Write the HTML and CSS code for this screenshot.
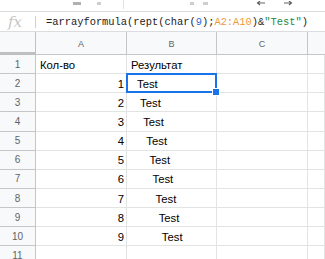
FILE: index.html
```html
<!DOCTYPE html>
<html lang="ru">

<head>
    <meta charset="UTF-8">
    <meta name="viewport" content="width=device-width, initial-scale=1.0">
    <title>Таблица</title>
    <link rel="stylesheet" href="styles.css">
</head>

<body>
    <div class="toolbar">
        <span class="tool tool-a"></span>
        <span class="tool tool-b"></span>
        <span class="tool-sep"></span>
        <span class="tool tool-c"></span>
        <span class="tool tool-d"></span>
        <svg class="arrow arrow-left" width="9" height="6" viewBox="0 0 9 6">
            <path d="M9 2H2M4 0L1.5 2L4 4" fill="none" stroke="#5f6368" stroke-width="1.2" />
        </svg>
        <svg class="arrow arrow-right" width="9" height="6" viewBox="0 0 9 6">
            <path d="M0 2H7M5 0L7.5 2L5 4" fill="none" stroke="#5f6368" stroke-width="1.2" />
        </svg>
    </div>

    <div class="formula-bar">
        <span class="fx">fx</span>
        <span class="fx-sep"></span>
        <span class="formula">=arrayformula(rept(char(<span class="f-num">9</span>);<span class="f-range">A2:A10</span>)&amp;<span class="f-str">"Test"</span>)</span>
    </div>

    <div class="sheet">
        <div class="corner"></div>
        <div class="col-head">A</div>
        <div class="col-head">B</div>
        <div class="col-head">C</div>
        <div class="col-head col-last"></div>

        <div class="row-head">1</div>
        <div class="cell">Кол-во</div>
        <div class="cell">Результат</div>
        <div class="cell"></div>
        <div class="cell"></div>

        <div class="row-head">2</div>
        <div class="cell num">1</div>
        <div class="cell result selected" style="--tabs: 1">Test</div>
        <div class="cell"></div>
        <div class="cell"></div>

        <div class="row-head">3</div>
        <div class="cell num">2</div>
        <div class="cell result" style="--tabs: 2">Test</div>
        <div class="cell"></div>
        <div class="cell"></div>

        <div class="row-head">4</div>
        <div class="cell num">3</div>
        <div class="cell result" style="--tabs: 3">Test</div>
        <div class="cell"></div>
        <div class="cell"></div>

        <div class="row-head">5</div>
        <div class="cell num">4</div>
        <div class="cell result" style="--tabs: 4">Test</div>
        <div class="cell"></div>
        <div class="cell"></div>

        <div class="row-head">6</div>
        <div class="cell num">5</div>
        <div class="cell result" style="--tabs: 5">Test</div>
        <div class="cell"></div>
        <div class="cell"></div>

        <div class="row-head">7</div>
        <div class="cell num">6</div>
        <div class="cell result" style="--tabs: 6">Test</div>
        <div class="cell"></div>
        <div class="cell"></div>

        <div class="row-head">8</div>
        <div class="cell num">7</div>
        <div class="cell result" style="--tabs: 7">Test</div>
        <div class="cell"></div>
        <div class="cell"></div>

        <div class="row-head">9</div>
        <div class="cell num">8</div>
        <div class="cell result" style="--tabs: 8">Test</div>
        <div class="cell"></div>
        <div class="cell"></div>

        <div class="row-head">10</div>
        <div class="cell num">9</div>
        <div class="cell result" style="--tabs: 9">Test</div>
        <div class="cell"></div>
        <div class="cell"></div>

        <div class="row-head">11</div>
        <div class="cell"></div>
        <div class="cell"></div>
        <div class="cell"></div>
        <div class="cell"></div>
    </div>
</body>

</html>
```

FILE: styles.css
```css
:root {
    --grid-line: #e2e3e3;
    --head-line: #c4c7c5;
    --head-bg: #f8f9fa;
    --row-h: 19.15px;
}

body {
    margin: 0;
    padding: 0;
    width: 325px;
    height: 259px;
    overflow: hidden;
    background-color: white;
    font-family: "Liberation Sans", Arial, sans-serif;
}

/* cut off toolbar at the top */
.toolbar {
    height: 12px;
    box-sizing: border-box;
    border-bottom: 1px solid #dadce0;
    display: flex;
    align-items: flex-start;
    overflow: hidden;
}

.tool {
    height: 3px;
    margin-top: 2px;
    background-color: #9aa0a6;
    opacity: 0.5;
}

.tool-a {
    width: 8px;
    margin-left: 73px;
    background-color: #5f6368;
}

.tool-b {
    width: 4px;
    margin-left: 16px;
}

.tool-sep {
    width: 1px;
    height: 9px;
    margin-left: 22px;
    background-color: #e0e0e0;
}

.tool-c {
    width: 4px;
    margin-left: 66px;
}

.tool-d {
    width: 5px;
    margin-left: 9px;
}

.arrow {
    margin-top: 1px;
}

.arrow-left {
    margin-left: 48px;
}

.arrow-right {
    margin-left: 19px;
}

/* formula bar */
.formula-bar {
    height: 20px;
    box-sizing: border-box;
    border-bottom: 1px solid #dadce0;
    display: flex;
    align-items: center;
}

.fx {
    width: 18px;
    margin-left: 8px;
    font-family: "DejaVu Serif", "Liberation Serif", serif;
    font-style: italic;
    font-size: 15px;
    color: #c6c6c6;
    line-height: 16px;
}

.fx-sep {
    width: 1px;
    height: 12px;
    margin-left: 9px;
    background-color: #d0d0d0;
}

.formula {
    margin-left: 10px;
    font-family: "Liberation Mono", "DejaVu Sans Mono", monospace;
    font-size: 10.4px;
    color: #222;
    white-space: pre;
}

.f-num {
    color: #2e6ad6;
}

.f-range {
    color: #f09a36;
}

.f-str {
    color: #1f8a3c;
}

/* sheet grid */
.sheet {
    display: grid;
    grid-template-columns: 36px 91px 90px 91px 1fr;
    grid-template-rows: 23px;
    grid-auto-rows: var(--row-h);
}

.corner {
    background-color: var(--head-bg);
    border-right: 3px solid #c0c0c0;
    border-bottom: 3px solid #c0c0c0;
    margin-right: -2px;
}

.col-head {
    background-color: var(--head-bg);
    border-right: 1px solid var(--head-line);
    border-bottom: 1px solid var(--head-line);
    display: flex;
    justify-content: center;
    align-items: center;
    padding-top: 2px;
    font-size: 9px;
    color: #5f6368;
}

.col-last {
    border-right: none;
}

.row-head {
    background-color: var(--head-bg);
    border-right: 1px solid var(--head-line);
    border-bottom: 1px solid var(--head-line);
    display: flex;
    justify-content: center;
    align-items: center;
    font-size: 10px;
    color: #5f6368;
}

.cell {
    border-right: 1px solid var(--grid-line);
    border-bottom: 1px solid var(--grid-line);
    display: flex;
    align-items: center;
    padding: 1px 0 0 4px;
    font-size: 11.3px;
    color: #000;
    white-space: nowrap;
    overflow: hidden;
}

.cell.num {
    justify-content: flex-end;
    padding-right: 2px;
}

.cell.result {
    padding-left: calc(6.9px + var(--tabs) * 3.1px);
}

.cell.selected {
    position: relative;
    overflow: visible;
}

.cell.selected::after {
    content: "";
    position: absolute;
    top: -1px;
    left: -1px;
    right: -1px;
    bottom: -1px;
    border: 2px solid #1a73e8;
}

.cell.selected::before {
    content: "";
    position: absolute;
    right: -4px;
    bottom: -4px;
    width: 6px;
    height: 6px;
    background-color: #1a73e8;
    border: 1px solid white;
    z-index: 1;
}
```
